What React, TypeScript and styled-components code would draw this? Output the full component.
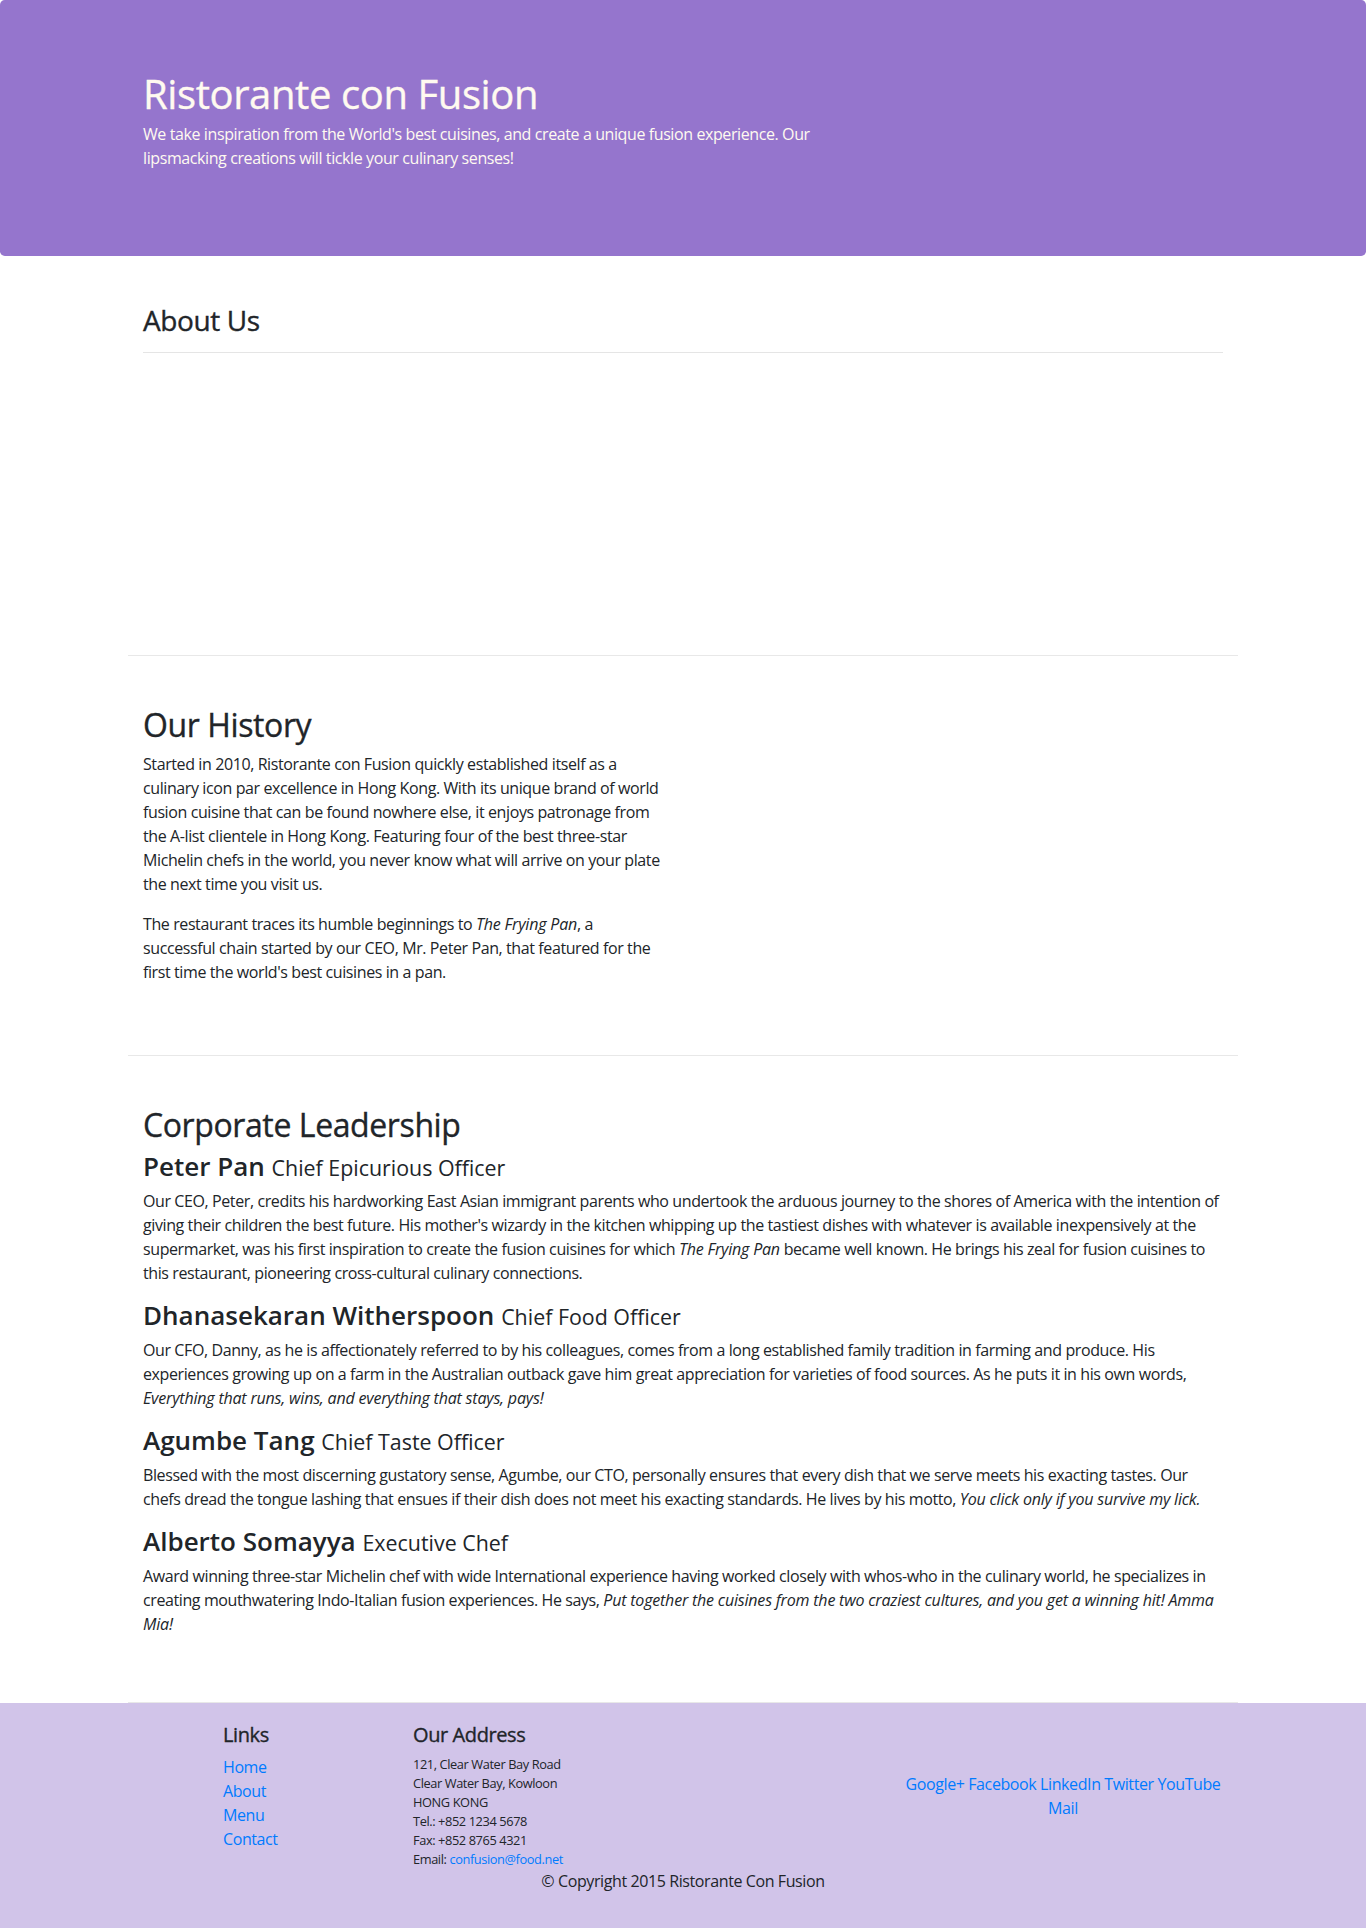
import React from "react";
import styled, { createGlobalStyle, css } from "styled-components";

const FONT = `"Open Sans", "Noto Sans", Arial, sans-serif`;

const GlobalStyle = createGlobalStyle`
  *, *::before, *::after { box-sizing: border-box; }
  html, body { margin: 0; padding: 0; }
  body {
    font-family: ${FONT};
    font-size: 16px;
    line-height: 1.5;
    color: #212529;
    background: #fff;
    letter-spacing: -0.025em;
  }
  em { letter-spacing: -0.012em; }
`;

const headingWeight = css`
  font-weight: 400;
  -webkit-text-stroke: 0.35px currentColor;
`;

const Jumbotron = styled.header`
  background: #9575cd;
  color: floralwhite;
  padding: 70px 30px;
  border-radius: 4.8px;
`;

const Container = styled.div`
  max-width: 1140px;
  margin: 0 auto;
  padding: 0 15px;
`;

const RowHeader = styled.div`
  display: flex;
  flex-wrap: wrap;
  margin: 0 auto;
`;

const Col = styled.div<{ $span?: number; $offset?: number; $align?: string }>`
  padding: 0 15px;
  flex: 0 0 ${(p) => ((p.$span ?? 12) / 12) * 100}%;
  max-width: ${(p) => ((p.$span ?? 12) / 12) * 100}%;
  margin-left: ${(p) => ((p.$offset ?? 0) / 12) * 100}%;
  align-self: ${(p) => p.$align ?? "auto"};
`;

const Title = styled.h1`
  font-size: 40px;
  line-height: 1.2;
  ${headingWeight};
  margin: 0 0 4px;
`;

const Lead = styled.p`
  margin: 0 0 16px;
`;

const RowContent = styled.section<{ $top?: number }>`
  display: flex;
  flex-wrap: wrap;
  margin: 0 auto;
  padding: ${(p) => p.$top ?? 50}px 0 50px;
  border-bottom: 1px solid #e8e8e8;
  min-height: 400px;
`;

const H2 = styled.h2`
  font-size: 32px;
  line-height: 1.2;
  ${headingWeight};
  margin: 0 0 8px;
`;

const H3 = styled.h3`
  font-size: 28px;
  line-height: 1.2;
  ${headingWeight};
  margin: 0;
`;

const Rule = styled.hr`
  border: 0;
  border-top: 1px solid rgba(0, 0, 0, 0.1);
  margin: 14px 0 16px;
`;

const Para = styled.p`
  margin: 0 0 16px;
`;

const LeaderItem = styled.article`
  margin-bottom: 1px;
`;

const LeaderHeading = styled.h4`
  margin: 0 0 8px;
  font-size: 26px;
  line-height: 28.8px;
  font-weight: 600;
  letter-spacing: 0;
`;

const Designation = styled.span`
  font-size: 21.4px;
  line-height: 1;
  font-weight: 400;
`;

const Footer = styled.footer`
  background: #d1c4e9;
  padding: 20px 0;
`;

const FooterRow = styled.div`
  display: flex;
  flex-wrap: wrap;
  margin: 0 -15px;
  justify-content: center;
`;

const H5 = styled.h5`
  font-size: 20px;
  line-height: 1.2;
  ${headingWeight};
  margin: 0 0 8px;
`;

const LinkList = styled.ul`
  list-style: none;
  padding: 0;
  margin: 0 0 16px;
`;

const Link = styled.a`
  color: #007bff;
  text-decoration: none;
`;

const Address = styled.address`
  font-style: normal;
  font-size: 12.8px;
  line-height: 19px;
  margin: 0;
`;

const Social = styled.div`
  text-align: center;
`;

const AutoCol = styled.div`
  flex: 0 0 auto;
  padding: 0 15px;
`;

const Copyright = styled.p`
  margin: 0 0 16px;
`;

const leaders = [
  {
    name: "Peter Pan",
    designation: "Chief Epicurious Officer",
    body: (
      <>
        Our CEO, Peter, credits his hardworking East Asian immigrant parents who undertook the arduous journey to the shores of America with the intention of giving their children the best future. His mother's wizardy in the kitchen whipping up the tastiest dishes with whatever is available inexpensively at the supermarket, was his first inspiration to create the fusion cuisines for which <em>The Frying Pan</em> became well known. He brings his zeal for fusion cuisines to this restaurant, pioneering cross-cultural culinary connections.
      </>
    ),
  },
  {
    name: "Dhanasekaran Witherspoon",
    designation: "Chief Food Officer",
    body: (
      <>
        Our CFO, Danny, as he is affectionately referred to by his colleagues, comes from a long established family tradition in farming and produce. His experiences growing up on a farm in the Australian outback gave him great appreciation for varieties of food sources. As he puts it in his own words, <em>Everything that runs, wins, and everything that stays, pays!</em>
      </>
    ),
  },
  {
    name: "Agumbe Tang",
    designation: "Chief Taste Officer",
    body: (
      <>
        Blessed with the most discerning gustatory sense, Agumbe, our CTO, personally ensures that every dish that we serve meets his exacting tastes. Our chefs dread the tongue lashing that ensues if their dish does not meet his exacting standards. He lives by his motto, <em>You click only if you survive my lick.</em>
      </>
    ),
  },
  {
    name: "Alberto Somayya",
    designation: "Executive Chef",
    body: (
      <>
        Award winning three-star Michelin chef with wide International experience having worked closely with whos-who in the culinary world, he specializes in creating mouthwatering Indo-Italian fusion experiences. He says, <em>Put together the cuisines from the two craziest cultures, and you get a winning hit! Amma Mia!</em>
      </>
    ),
  },
];

export default function App() {
  return (
    <>
      <GlobalStyle />
      <Jumbotron>
        <Container>
          <RowHeader>
            <Col $span={8}>
              <Title>Ristorante con Fusion</Title>
              <Lead>
                We take inspiration from the World's best cuisines, and create a unique fusion experience. Our lipsmacking creations will tickle your culinary senses!
              </Lead>
            </Col>
          </RowHeader>
        </Container>
      </Jumbotron>

      <Container>
        <RowContent $top={48}>
          <Col>
            <H3>About Us</H3>
            <Rule />
          </Col>
        </RowContent>

        <RowContent>
          <Col $span={6}>
            <H2>Our History</H2>
            <Para>
              Started in 2010, Ristorante con Fusion quickly established itself as a culinary icon par excellence in Hong Kong. With its unique brand of world fusion cuisine that can be found nowhere else, it enjoys patronage from the A-list clientele in Hong Kong. Featuring four of the best three-star Michelin chefs in the world, you never know what will arrive on your plate the next time you visit us.
            </Para>
            <Para>
              The restaurant traces its humble beginnings to <em>The Frying Pan</em>, a successful chain started by our CEO, Mr. Peter Pan, that featured for the first time the world's best cuisines in a pan.
            </Para>
          </Col>
        </RowContent>

        <RowContent>
          <Col>
            <H2>Corporate Leadership</H2>
            {leaders.map((l) => (
              <LeaderItem key={l.name}>
                <LeaderHeading>
                  {l.name} <Designation>{l.designation}</Designation>
                </LeaderHeading>
                <Para>{l.body}</Para>
              </LeaderItem>
            ))}
          </Col>
        </RowContent>
      </Container>

      <Footer>
        <Container>
          <FooterRow>
            <Col $span={2} $offset={1}>
              <H5>Links</H5>
              <LinkList>
                <li><Link href="#">Home</Link></li>
                <li><Link href="#">About</Link></li>
                <li><Link href="#">Menu</Link></li>
                <li><Link href="#">Contact</Link></li>
              </LinkList>
            </Col>
            <Col $span={5}>
              <H5>Our Address</H5>
              <Address>
                121, Clear Water Bay Road<br />
                Clear Water Bay, Kowloon<br />
                HONG KONG<br />
                Tel.: +852 1234 5678<br />
                Fax: +852 8765 4321<br />
                Email: <Link href="#">confusion@food.net</Link>
              </Address>
            </Col>
            <Col $span={4} $align="center">
              <Social>
                <Link href="#">Google+</Link> <Link href="#">Facebook</Link> <Link href="#">LinkedIn</Link> <Link href="#">Twitter</Link> <Link href="#">YouTube</Link>
                <br />
                <Link href="#">Mail</Link>
              </Social>
            </Col>
          </FooterRow>
          <FooterRow>
            <AutoCol>
              <Copyright>© Copyright 2015 Ristorante Con Fusion</Copyright>
            </AutoCol>
          </FooterRow>
        </Container>
      </Footer>
    </>
  );
}
